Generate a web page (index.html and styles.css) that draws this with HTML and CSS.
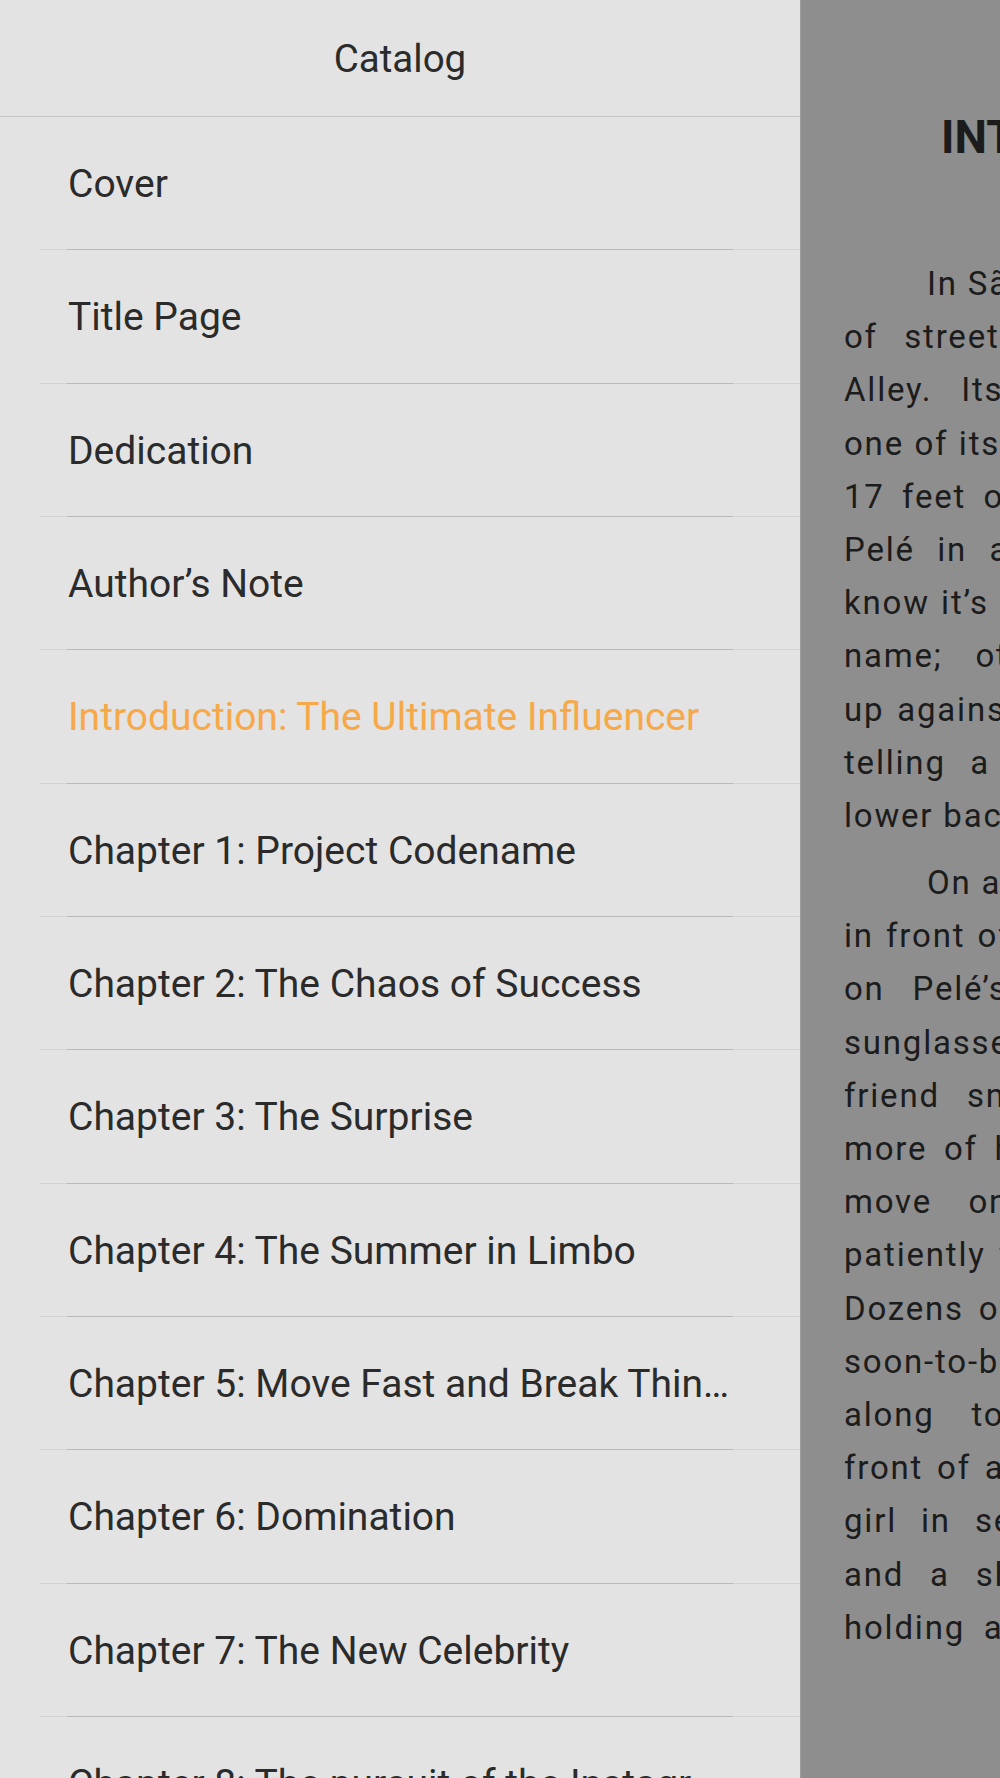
FILE: index.html
```html
<!DOCTYPE html>
<html lang="en">
<head>
    <meta charset="UTF-8">
    <meta name="viewport" content="width=device-width, initial-scale=1.0">
    <title>Catalog - No Filter</title>
    <link rel="stylesheet" href="styles.css">
</head>

<body>
    <aside class="catalog">
        <header class="catalog-header">Catalog</header>
        <ul class="toc">
            <li class="toc-item"><span class="toc-title">Cover</span></li>
            <li class="toc-item"><span class="toc-title">Title Page</span></li>
            <li class="toc-item"><span class="toc-title">Dedication</span></li>
            <li class="toc-item"><span class="toc-title">Author’s Note</span></li>
            <li class="toc-item active"><span class="toc-title">Introduction: The Ultimate Influencer</span></li>
            <li class="toc-item"><span class="toc-title">Chapter 1: Project Codename</span></li>
            <li class="toc-item"><span class="toc-title">Chapter 2: The Chaos of Success</span></li>
            <li class="toc-item"><span class="toc-title">Chapter 3: The Surprise</span></li>
            <li class="toc-item"><span class="toc-title">Chapter 4: The Summer in Limbo</span></li>
            <li class="toc-item"><span class="toc-title">Chapter 5: Move Fast and Break Things</span></li>
            <li class="toc-item"><span class="toc-title">Chapter 6: Domination</span></li>
            <li class="toc-item"><span class="toc-title">Chapter 7: The New Celebrity</span></li>
            <li class="toc-item"><span class="toc-title">Chapter 8: The pursuit of the Instagrammable</span></li>
            <li class="toc-item"><span class="toc-title">Chapter 9: The Copy</span></li>
        </ul>
    </aside>

    <main class="page">
        <h1 class="chapter-title">INTRODUCTION</h1>

        <p class="para">
            <span class="ln first">In São Paulo, Brazil, there is a narrow, winding lane</span>
            <span class="ln">of street art in the Vila Madalena called Batman</span>
            <span class="ln">Alley. Its walls are covered in vivid murals, and</span>
            <span class="ln">one of its most famous pieces is a giant portrait, nearly</span>
            <span class="ln">17 feet of painted concrete showing the soccer hero</span>
            <span class="ln">Pelé in a golden crown. Visitors who stop by may</span>
            <span class="ln">know it’s him; a few of them only recognize the famous</span>
            <span class="ln">name; others just like its colors. They all line</span>
            <span class="ln">up against the wall, smiling as a friend takes a picture</span>
            <span class="ln">telling a story about the weekend, a hand on the</span>
            <span class="ln last">lower back, a tilt of the head.</span>
        </p>

        <p class="para">
            <span class="ln first">On a recent Saturday afternoon, a young man stood by</span>
            <span class="ln">in front of the mural, his arm draped casually around it</span>
            <span class="ln">on Pelé’s painted shoulder, wearing mirrored gold</span>
            <span class="ln">sunglasses and a crisp white shirt while his close pal</span>
            <span class="ln">friend snapped photo after photo, asking him for</span>
            <span class="ln">more of his profile. When they finally walked off, the</span>
            <span class="ln">move on, the next group stepped forward, all</span>
            <span class="ln">patiently waiting for their turn against the painted wall</span>
            <span class="ln">Dozens of people do the same thing every single day:</span>
            <span class="ln">soon-to-be brides, teenagers who came on a school trip</span>
            <span class="ln">along to the city, couples who stop in front</span>
            <span class="ln">front of a favorite shop, a little boy with a red balloon</span>
            <span class="ln">girl in sequined shoes spinning slowly around and</span>
            <span class="ln">and a shy tourist with a long selfie stick, all of</span>
            <span class="ln">holding a phone high above the heads of the crowd</span>
        </p>
    </main>
</body>
</html>
```

FILE: styles.css
```css
body {
    margin: 0;
    padding: 0;
    height: 1778px;
    display: flex;
    overflow: hidden;
    font-family: 'Roboto', 'Liberation Sans', sans-serif;
    color: #2b2b2b;
}

.catalog {
    width: 800px;
    flex-shrink: 0;
    background-color: #e3e3e3;
}

.catalog-header {
    height: 116px;
    display: flex;
    align-items: center;
    justify-content: center;
    font-size: 38.5px;
    border-bottom: 1px solid #c6c6c6;
}

.toc {
    list-style: none;
    margin: 0;
    padding: 0;
}

.toc-item {
    height: 133.333px;
    margin-left: 40px;
    display: flex;
    flex-direction: column;
}

.toc-item::after {
    content: "";
    height: 1px;
    background: linear-gradient(to right, #d2d2d2 27px, #bababa 27px, #bababa 693px, #d2d2d2 693px);
}

.toc-title {
    flex: 1;
    display: block;
    padding: 3px 67px 0 28px;
    font-size: 39px;
    line-height: 129.333px;
    white-space: nowrap;
    overflow: hidden;
    text-overflow: ellipsis;
}

.toc-item.active .toc-title {
    color: #f7a848;
}

.page {
    width: 1000px;
    flex-shrink: 0;
    padding: 0 43px;
    box-sizing: border-box;
    background-color: #8e8e8e;
    border-left: 1px solid #9c9c9c;
    color: #1c1c1c;
}

.chapter-title {
    margin: 107px 0 90px;
    padding-left: 97px;
    font-size: 46px;
    line-height: 60px;
    font-weight: bold;
}

.para {
    margin: 0 0 13.7px;
    font-size: 33px;
    line-height: 53.2px;
    letter-spacing: 1.8px;
}

.ln {
    display: block;
    white-space: nowrap;
    text-align: justify;
    text-align-last: justify;
}

.ln.first {
    text-indent: 83px;
}

.ln.last {
    text-align-last: left;
}
```
